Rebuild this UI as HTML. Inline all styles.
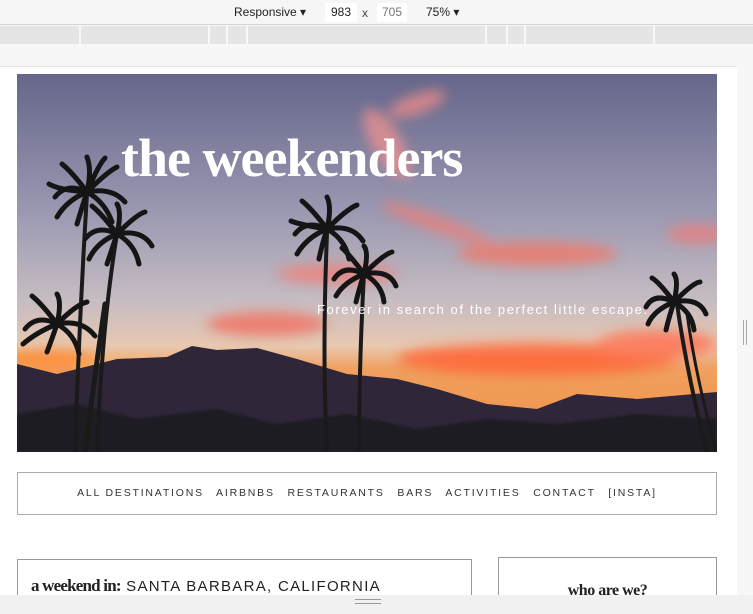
<!DOCTYPE html>
<html><head><meta charset="utf-8"><style>
*{margin:0;padding:0;box-sizing:border-box}
body{width:753px;height:614px;overflow:hidden;background:#f7f7f7;font-family:"Liberation Sans",sans-serif;position:relative}
.top{position:absolute;left:0;top:0;width:753px;height:25px;background:#f6f6f6;border-bottom:1px solid #d4d4d4;font-size:12px;color:#222}
.ruler{position:absolute;left:0;top:26px;width:753px;height:18px;background:#e5e5e5}
.ruler i{position:absolute;top:0;width:2px;height:18px;background:#f7f7f7}
.page{position:absolute;left:0;top:66px;width:737px;height:529px;background:#fff;overflow:hidden;border-top:1px solid #e4e4e4}
.bottom{position:absolute;left:0;top:595px;width:753px;height:19px;background:#f1f1f1}
.hero{position:absolute;left:17px;top:7px;width:700px;height:378px;overflow:hidden}
.title{position:absolute;left:104px;top:53px;font-family:"Liberation Serif",serif;font-weight:bold;font-size:54px;color:#fff;letter-spacing:-1px}
.tag{position:absolute;left:300px;top:228px;font-size:13px;color:#fff;letter-spacing:1.6px;white-space:nowrap}
.nav{position:absolute;left:17px;top:405px;width:700px;height:43px;border:1px solid #aaa;text-align:center;font-size:10.5px;letter-spacing:1.8px;color:#333;line-height:41px;word-spacing:8px}
.nav span{word-spacing:0}
.box1{position:absolute;left:17px;top:492px;width:455px;height:60px;border:1px solid #999}
.box2{position:absolute;left:498px;top:490px;width:219px;height:60px;border:1px solid #999}
</style></head><body>
<div class="top">
<span style="position:absolute;left:234px;top:5px">Responsive ▾</span>
<span style="position:absolute;left:325px;top:3px;width:32px;height:19px;background:#fff;text-align:center;line-height:19px">983</span>
<span style="position:absolute;left:362px;top:6px;color:#444">x</span>
<span style="position:absolute;left:377px;top:3px;width:30px;height:19px;background:#fff;text-align:center;line-height:19px;color:#777">705</span>
<span style="position:absolute;left:426px;top:5px">75% ▾</span>
</div>
<div class="ruler"><i style="left:79px"></i><i style="left:208px"></i><i style="left:226px"></i><i style="left:246px"></i><i style="left:485px"></i><i style="left:506px"></i><i style="left:524px"></i><i style="left:653px"></i></div>
<div style="position:absolute;left:743px;top:320px;width:4px;height:25px;border-left:1px solid #aaa;border-right:1px solid #aaa"></div>
<div class="page">
<div class="hero">
<svg width="700" height="378" viewBox="0 0 700 378">
<defs>
<linearGradient id="sky" x1="0" y1="0" x2="0" y2="1">
<stop offset="0" stop-color="#65668a"/><stop offset="0.35" stop-color="#9896b0"/><stop offset="0.6" stop-color="#c6bcc2"/><stop offset="0.72" stop-color="#e8c8b0"/><stop offset="0.78" stop-color="#f0a060"/><stop offset="1" stop-color="#f09040"/>
</linearGradient>
<filter id="b"><feGaussianBlur stdDeviation="6"/></filter>
<filter id="b2"><feGaussianBlur stdDeviation="1"/></filter>
</defs>
<rect width="700" height="378" fill="url(#sky)"/>
<g filter="url(#b)" opacity="0.8">
<ellipse cx="400" cy="30" rx="30" ry="10" fill="#e88a88" transform="rotate(-20 400 30)"/>
<ellipse cx="370" cy="70" rx="15" ry="40" fill="#e89090" transform="rotate(-30 370 70)"/>
<ellipse cx="520" cy="180" rx="80" ry="12" fill="#f07868"/>
<ellipse cx="420" cy="150" rx="60" ry="8" fill="#e8807a" transform="rotate(20 420 150)"/>
<ellipse cx="250" cy="250" rx="60" ry="12" fill="#f07060"/>
<ellipse cx="230" cy="345" rx="70" ry="10" fill="#f06850"/>
<ellipse cx="520" cy="285" rx="140" ry="16" fill="#ff6030"/>
<ellipse cx="640" cy="270" rx="60" ry="14" fill="#ff7050"/>
<ellipse cx="30" cy="285" rx="50" ry="10" fill="#ff8a30"/>
<ellipse cx="680" cy="160" rx="30" ry="10" fill="#e88080"/>
<ellipse cx="120" cy="295" rx="60" ry="8" fill="#ffc060"/>
<ellipse cx="320" cy="200" rx="60" ry="10" fill="#f08078"/>
</g>
<path d="M0 290 L40 300 L100 285 L150 283 L175 272 L200 276 L240 274 L280 285 L330 300 L380 305 L420 315 L470 330 L520 335 L560 320 L620 325 L700 318 L700 378 L0 378Z" fill="#30263a"/>
<path d="M0 340 L60 330 L120 345 L200 335 L260 350 L330 340 L400 355 L470 345 L540 350 L620 340 L700 345 L700 378 L0 378Z" fill="#1e1a22" filter="url(#b2)"/>
<g stroke="#1a1a1a" fill="none" stroke-linecap="round">
<path d="M88 230 Q78 300 68 378" stroke-width="5"/>
<path d="M70 120 Q62 250 58 378" stroke-width="4"/>
<path d="M100 160 Q85 250 80 378" stroke-width="4"/>
<path d="M310 160 Q305 280 310 378" stroke-width="4"/>
<path d="M347 200 Q342 290 342 378" stroke-width="4"/>
<path d="M660 230 Q670 300 690 378" stroke-width="4"/>
<path d="M670 240 Q680 310 700 378" stroke-width="3"/>
</g>
<g stroke="#151515" stroke-width="5" fill="none" stroke-linecap="round">
<g transform="translate(70,118)"><path d="M0 0 Q-20 -10 -32 5 M0 0 Q-15 -20 -25 -28 M0 0 Q5 -22 0 -35 M0 0 Q20 -20 30 -25 M0 0 Q25 -5 38 10 M0 0 Q18 10 25 30 M0 0 Q-5 15 -10 32 M0 0 Q-20 8 -30 25 M0 0 Q-28 -2 -38 -8 M0 0 Q12 -28 18 -34"/></g>
<g transform="translate(100,160)"><path d="M0 0 Q-20 -10 -32 5 M0 0 Q-15 -20 -25 -28 M0 0 Q5 -22 0 -30 M0 0 Q20 -20 28 -22 M0 0 Q25 -5 35 12 M0 0 Q18 10 22 30 M0 0 Q-5 15 -10 30 M0 0 Q-20 8 -28 25"/></g>
<g transform="translate(40,250)"><path d="M0 0 Q-20 -10 -32 5 M0 0 Q-15 -20 -25 -28 M0 0 Q5 -22 0 -30 M0 0 Q20 -20 30 -22 M0 0 Q25 -5 38 12 M0 0 Q18 10 22 30 M0 0 Q-5 15 -10 28 M0 0 Q-20 8 -34 20"/></g>
<g transform="translate(310,155)"><path d="M0 0 Q-20 -10 -32 5 M0 0 Q-15 -20 -25 -28 M0 0 Q5 -22 0 -32 M0 0 Q20 -20 30 -24 M0 0 Q25 -5 36 12 M0 0 Q18 10 22 30 M0 0 Q-5 15 -8 30 M0 0 Q-20 8 -30 25 M0 0 Q-26 -4 -36 -8"/></g>
<g transform="translate(347,200)"><path d="M0 0 Q-20 -10 -30 5 M0 0 Q-15 -20 -22 -26 M0 0 Q5 -22 0 -28 M0 0 Q20 -20 28 -22 M0 0 Q25 -5 32 12 M0 0 Q18 10 20 28 M0 0 Q-5 15 -8 28 M0 0 Q-20 8 -28 22"/></g>
<g transform="translate(657,228)"><path d="M0 0 Q-20 -10 -28 5 M0 0 Q-15 -20 -22 -24 M0 0 Q5 -22 0 -28 M0 0 Q20 -20 26 -20 M0 0 Q25 -5 32 12 M0 0 Q18 10 20 28 M0 0 Q-5 15 -8 28 M0 0 Q-20 8 -26 22"/></g>
</g>
</svg>
<div class="title">the weekenders</div>
<div class="tag">Forever in search of the perfect little escape.</div>
</div>
<div class="nav"><span>ALL DESTINATIONS</span> AIRBNBS RESTAURANTS BARS ACTIVITIES CONTACT [INSTA]</div>
<div class="box1"><div style="position:absolute;left:13px;top:16px;font-size:17px;color:#222;white-space:nowrap"><b style="font-family:'Liberation Serif',serif;letter-spacing:-0.8px">a weekend in:</b><span style="letter-spacing:1.3px;font-size:15px"> SANTA BARBARA, CALIFORNIA</span></div></div>
<div class="box2"><div style="position:absolute;left:0;width:100%;top:24px;text-align:center;font-family:'Liberation Serif',serif;font-weight:bold;font-size:16px;color:#222;letter-spacing:-0.5px">who are we?</div></div>
</div>
<div class="bottom"><div style="position:absolute;left:355px;top:4px;width:26px;height:5px;border-top:1px solid #999;border-bottom:1px solid #999"></div></div>
</body></html>
